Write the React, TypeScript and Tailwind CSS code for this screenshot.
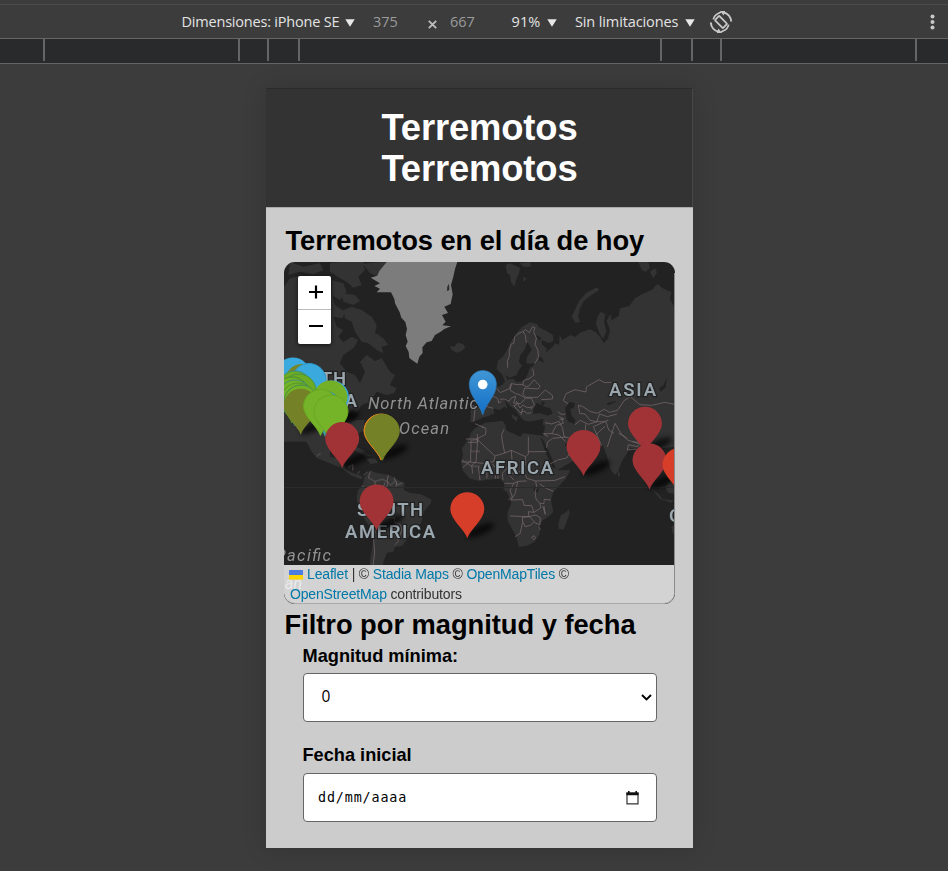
import React from "react";

const pinPath = "M0 0C-3 -9 -17 -19 -17 -29A17 17 0 0 1 17 -29C17 -19 3 -9 0 0Z";

type PinProps = { x: number; y: number; fill: string; stroke?: string; shadow?: boolean };

function Pin({ x, y, fill, stroke = "none", shadow = true }: PinProps) {
  return (
    <g transform={`translate(${x} ${y})`}>
      {shadow && <ellipse cx="13" cy="-8" rx="15" ry="4.5" transform="rotate(-24 13 -8)" fill="#000" opacity="0.7" filter="url(#soft)" />}
      <path d={pinPath} fill={fill} stroke={stroke} strokeWidth="1" />
    </g>
  );
}

function Label({ x, y, w, children }: { x: number; y: number; w?: number; children: string }) {
  return (
    <text x={x} y={y} textLength={w} fontSize="18.5" fontWeight="600" fill="#9ba7af" stroke="#222" strokeWidth="2.5" paintOrder="stroke">
      {children}
    </text>
  );
}

function WorldMap() {
  return (
    <svg className="block h-full w-full" viewBox="284 262 391 342" preserveAspectRatio="none" fontFamily="Roboto, sans-serif">
      <defs>
        <filter id="soft" x="-50%" y="-150%" width="200%" height="400%"><feGaussianBlur stdDeviation="2.6" /></filter>
        <linearGradient id="blue" x1="0" y1="0" x2="0" y2="1"><stop offset="0" stopColor="#4096d5" /><stop offset="1" stopColor="#126fc6" /></linearGradient>
      </defs>
      <rect x="284" y="262" width="391" height="342" fill="#222" />

      <g transform="translate(280 255) scale(.33333)" fill="#333">
        <path d="M12 95L30 70 60 62 110 75 150 100 165 150 195 170 188 190 160 185 170 215 190 225 175 245 190 262 215 245 235 255 220 280 190 300 180 325 200 350 225 360 240 385 255 350 240 320 260 300 285 318 305 310 330 350 345 360 330 390 350 400 342 415 320 420 290 410 270 440 245 450 225 480 200 510 200 560 12 560Z" />
        <path d="M30 21L70 35 120 25 130 45 100 58 60 50 25 60ZM150 25L180 21 250 21 255 45 235 65 245 90 220 98 200 80 180 70 150 50ZM248 26L300 21 350 21 325 45 295 65 270 55ZM155 75L190 85 200 110 180 135 155 120ZM185 115L225 120 240 138 220 150 190 140ZM190 165L215 155 245 165 275 185 290 210 285 235 310 250 325 270 305 275 310 295 290 285 265 265 245 260 225 230 215 200 195 190Z" />
        <path d="M285 235L300 240 290 250ZM510 272L522 275 533 263 550 268 556 278 545 288 530 293 515 285Z" />
        <path d="M320 21L298 48 292 62 272 68 300 85 283 93 300 101 290 112 333 112 343 132 345 145 359 172 364 188 376 201 381 222 377 240 383 260 377 273 386 291 388 309 400 318 412 326 418 305 428 294 427 277 440 262 455 258 465 240 482 230 493 222 513 214 487 211 497 200 486 180 504 174 493 155 512 147 518 118 513 90 520 65 525 42 532 21Z" fill="#7c7c7c" />
        <path d="M502 95L507 86 508 105 501 108Z" fill="#292929" />
      </g>

      <g transform="translate(475 255) scale(.33333)">
        <path d="M68 318L83 305 96 286 105 265 125 235 142 215 165 202 188 208 190 216 210 226 234 240 235 258 222 264 200 255 200 268 215 280 213 292 233 275 240 265 252 270 254 240 262 255 287 240 300 246 315 233 345 223 362 232 377 248 386 265 399 250 405 225 395 198 406 177 410 196 431 183 435 160 463 153 480 130 500 118 531 104 548 86 560 98 590 112 584 130 600 160 600 575 560 580 490 580 465 580 440 620 430 647 420 661 407 645 395 600 383 570 340 558 325 580 290 620 250 644 238 625 223 592 204 548 210 513 190 500 168 500 148 497 130 480 125 500 113 490 105 465 88 455 75 465 55 460 58 475 35 485 32 500 5 510 -14 500 -12 450 20 449 20 425 45 415 66 395 78 392 90 380 82 360 65 342Z" fill="#333" />
        <path d="M92 30L105 25 135 38 132 55 123 75 118 95 108 80 105 60 96 55ZM135 25L165 21 168 35 145 35ZM145 66L155 70 145 82ZM490 21L520 21 525 40 512 50 500 45ZM525 50L540 40 546 52 535 70ZM290 185L302 160 312 138 333 115 365 97 373 105 350 119 326 138 314 162 310 183 315 200 302 204ZM362 205L370 180 378 170 391 178 387 202 394 228 385 253 374 236Z" fill="#333" />
        <path d="M20 400L40 378 35 350 45 350 58 380 65 400 50 410Z" fill="#333" />
        <path d="M157 260L150 282 136 300 132 320 141 332 128 350 126 360 105 368 90 360 98 374 116 371 124 382 147 378 157 360 165 338 187 323 165 326 153 324 156 305 170 284Z" fill="#222" />
        <path d="M182 240L199 248 193 258ZM190 305L202 309 207 322 194 318ZM175 463L185 443 201 451 198 438 211 442 203 454 226 460 233 475 220 482 192 474 174 477ZM271 458L285 441 300 445 296 458 286 462 290 482 301 495 298 507 280 500 273 485ZM88 430L102 450 122 465 134 484 122 485 100 470ZM552 400L566 390 575 369 572 396 558 410ZM395 445L422 438 421 442 399 451Z" fill="#222" />
      </g>

      <g transform="translate(280 420) scale(.33333)" fill="#333">
        <path d="M20 0L120 0 155 20 230 0 254 0 250 32 232 42 205 32 180 45 150 80 150 110 188 119 196 147 218 159 240 165 249 174 242 178 215 167 182 143 140 126 109 113 94 93 72 52Z" />
        <path d="M211 83L230 80 250 91 273 107 256 110 231 95ZM258 115L285 116 295 128 272 132Z" />
        <path d="M253 171L272 151 283 157 305 161 330 166 355 181 374 190 371 209 390 219 423 223 455 239 451 252 433 272 423 311 397 325 388 348 367 377 345 381 340 395 321 398 310 425 310 455 295 492 282 500 270 475 269 430 278 372 286 335 261 309 239 276 230 238 234 210 248 196Z" />
      </g>

      <g transform="translate(475 420) scale(.33333)" fill="#333">
        <path d="M0 25L30 8 83 2 92 15 95 31 136 50 143 39 188 45 204 47 219 83 236 124 250 151 286 150 274 174 244 206 235 216 228 241 235 275 222 289 203 301 194 320 194 341 179 365 159 376 132 382 124 351 98 302 97 280 109 249 98 219 85 208 89 191 75 176 37 179 14 183 -15 176 -36 153 -42 125 -36 106 -39 85 -18 54 -12 38Z" />
        <path d="M274 276L281 268 284 280 266 329 251 326 250 311 257 286ZM427 147L436 164 429 172ZM486 84L500 90 500 133 510 145 520 165 530 155 532 187 540 212 528 185 515 150 510 85ZM527 202L550 222 563 238 595 241 590 248 554 236ZM570 200L590 180 600 195 600 221 580 219ZM589 322L600 310 600 349 594 343Z" />
        <path d="M-10 8L25 -8 85 -18 92 -6 100 12 130 22 150 30 145 12 165 5 205 -4 203 28 190 44 145 38 136 48 96 30 92 14 82 2 30 7 0 20Z" fill="#222" />
        <path d="M196 51L205 61 224 100 242 145 234 144 211 96ZM273 69L292 85 305 91 301 97 286 88 269 77Z" fill="#222" />
        <path d="M175 200H190V216H177ZM203 231L207 247 203 250Z" fill="#222" />
      </g>

      <g fill="none" stroke="#907d81" strokeWidth="2.1" strokeLinejoin="round" opacity=".78">
        <g transform="translate(475 255) scale(.33333)">
          <path d="M98 338L97 318 103 303 103 288 108 268 116 265 119 246 128 237 144 230 151 240 154 264M144 230L152 224 163 233 173 215 180 218 176 230 184 250 180 268 189 286 190 307 178 328M173 341L177 360 163 371 145 377 144 389 154 395 163 392 177 374M177 374L195 393 190 402 149 399M149 399L143 418 153 427 188 427 211 405 233 422 232 432 199 434M65 400L76 413 103 401 109 386 129 389 144 389M109 386L105 406 121 415 137 421 150 429 170 430 178 450 167 463M75 433L88 432 102 439 110 428 122 424 116 444 136 446 151 432M124 438L135 459 143 450 157 458 171 456M126 449L116 452 136 473 146 468 157 475 169 473M54 424L68 430 71 444 79 439M-8 452L1 455-4 499M20 450L55 460M143 461L138 480M265 437L273 416 300 404 333 411 334 396 372 374 389 383 408 382M265 437L279 446M310 451L322 454 345 469 366 475 388 463 403 472 428 466 447 437 466 425 495 449 530 451 570 442 598 448M310 451L314 475 330 477 345 496 365 500 374 477 397 485 426 477M210 503L230 507 252 499 263 520 267 545 292 552M248 470L259 478 272 477M250 484L267 492 254 493M300 509L316 496 340 508 366 500 393 500 401 525 417 535M332 508L331 535 355 548 373 529 390 514M0 506L28 518" />
        </g>
        <g transform="translate(475 420) scale(.33333)">
          <path d="M20 20L33 25 32 43 5 57-27 57M7 42L7 67-21 67M5 57L60 108 89 99 81 58 80 43 87 28M89 99L109 91 152 110 160 102 160 50M160 95H215M152 110L150 137 143 150 156 175 182 183 222 182 240 181 270 170M109 91L111 120 97 140 101 162 117 181M60 108L56 125 25 130-17 126-37 143M8 60L3 125-10 136-7 161M10 140L15 180M35 136L36 175M53 132L62 145 61 176M67 143L69 177M98 141L82 161 84 181M101 162L132 156 145 150M88 190L117 190 128 184 155 183M117 190L105 210 112 230 100 240M128 184L121 220 108 240 143 239 147 256 170 257 177 277 160 275 162 290 105 288M182 183L185 201 180 216 183 237 194 250 207 251 207 238 228 240M194 192L218 207 235 214M177 277L197 264 195 251M203 258L211 283 207 258M162 290L142 292 143 307 135 341M145 307L150 320 166 316 178 305 164 291M162 290L182 285 196 293 194 314 178 308M135 341L120 350M170 352L177 347 182 353 177 359ZM190 320L196 327 191 332M220 50L205 41 230 41 244 16 265 10 260 -4M215 83L217 67 232 55 272 51M230 41L252 45 272 65M248 120L275 114 289 93M225 132L247 121M380 78L355 20 400 0M397 81L420 10 439 42 458 60 493 72 487 80 460 74 457 90 485 87M430 39L457 55M472 65L492 67" />
        </g>
        <g transform="translate(280 420) scale(.33333)">
          <path d="M271 155L265 173 284 184 289 210 301 215M245 197L260 207 278 218 257 230 248 225M284 184L309 178 324 187 319 205M325 165L321 184 332 196 346 182 342 172M346 182L353 195 368 188M285 210L308 205 315 188M350 185L348 201M240 260L278 247 286 258 298 268 282 280M278 280L291 287 311 278 325 291 343 292 344 306 360 313 366 329 360 346M289 289L291 309 304 312 324 325 343 326 345 345 365 355M287 330L281 359 284 400 278 443 286 490M345 345L356 363 344 375M545 125H572V94L600 94M546 121L576 139 600 139M573 94V62L597 57M204 143L219 133 218 151M232 161L239 154M250 166L265 155M110 108L122 100" />
        </g>
      </g>

      <rect x="284" y="487" width="391" height="1" fill="#2b2b2b" />
      <g fontStyle="italic" fontSize="16.5" fill="#919191" stroke="#222" strokeWidth="2" paintOrder="stroke">
        <text x="368" y="409" textLength="110">North Atlantic</text>
        <text x="399" y="433.5" textLength="50">Ocean</text>
        <text x="275.5" y="561" textLength="55.5">Pacific</text>
      </g>
      <Label x={281} y={385} w={65}>NORTH</Label>
      <Label x={269} y={407} w={88}>AMERICA</Label>
      <Label x={357} y={516} w={66}>SOUTH</Label>
      <Label x={345} y={538} w={90}>AMERICA</Label>
      <Label x={481} y={473.5} w={72}>AFRICA</Label>
      <Label x={609} y={395.5} w={47}>ASIA</Label>
      <Label x={669} y={522} w={80}>OCEANIA</Label>

      <Pin x={293} y={403.5} fill="#3aa9dd" />
      <Pin x={302} y={410} fill="#788627" />
      <Pin x={309} y={409.5} fill="#3aa9dd" stroke="#2e9ace" />
      <Pin x={332} y={426.5} fill="#3aa9dd" />
      <Pin x={330.5} y={426.5} fill="#73b027" />
      <Pin x={295} y={417} fill="#6eab25" stroke="#388f78" shadow={false} />
      <Pin x={299} y={420} fill="#6eab25" stroke="#489344" shadow={false} />
      <Pin x={292} y={423} fill="#72b225" stroke="#468d2b" shadow={false} />
      <Pin x={295} y={426} fill="#74b227" stroke="#408a77" shadow={false} />
      <Pin x={298} y={429} fill="#74b227" stroke="#51962b" shadow={false} />
      <Pin x={301} y={431} fill="#74b227" stroke="#458a4e" shadow={false} />
      <Pin x={300.7} y={434.7} fill="#748126" />
      <Pin x={325} y={437} fill="#3e97a0" shadow={false} />
      <Pin x={320.5} y={435.5} fill="#75b329" stroke="#67a822" shadow={false} />
      <Pin x={331} y={441} fill="#75b329" stroke="#67a822" shadow={false} />
      <Pin x={342.2} y={468} fill="#a13336" />
      <Pin x={381} y={460} fill="#e28a20" stroke="#e28a20" />
      <Pin x={382.3} y={460.3} fill="#748126" stroke="#748126" shadow={false} />
      <Pin x={376.6} y={530.5} fill="#a13336" />
      <Pin x={467.3} y={538.3} fill="#d63e2a" />
      <Pin x={583.5} y={476} fill="#a13336" />
      <Pin x={645} y={452.7} fill="#a13336" />
      <Pin x={649.5} y={489.5} fill="#a13336" />
      <Pin x={679.5} y={494} fill="#d63e2a" />
      <path d="M482.7 415C479.5 403 469.2 396 469.2 384A13.6 13.6 0 0 1 496.4 384C496.4 396 486 403 482.7 415Z" fill="url(#blue)" stroke="#2e78b4" strokeWidth=".7" />
      <circle cx="482.7" cy="384.5" r="4.8" fill="#fff" />
    </svg>
  );
}

function Caret() {
  return <svg className="mt-[2px] h-2 w-[10px]" viewBox="0 0 10 8"><path d="M.3 .3H9.7L5 7.8Z" fill="#e8e8e8" /></svg>;
}

function RotateIcon() {
  return (
    <svg className="h-6 w-6" viewBox="0 0 24 24" fill="none" stroke="#c8c8c8" strokeWidth="1.8">
      <rect x="8.9" y="6.3" width="6.2" height="11.4" rx="0.8" transform="rotate(-45 12 12)" />
      <path d="M14.5 2.2A10.2 10.2 0 0 1 22.2 11.5M9.5 21.8A10.2 10.2 0 0 1 1.8 12.5" strokeWidth="2" />
      <path d="M11 1H16.2L14.6 5.4ZM13 23H7.8L9.4 18.6Z" fill="#c8c8c8" stroke="none" />
      <path d="M4.3 9.4A9 9 0 0 1 9.6 3.2L12 2M19.7 14.6A9 9 0 0 1 14.4 20.8L12 22" strokeWidth="1.7" />
    </svg>
  );
}

function Toolbar() {
  return (
    <div className="flex h-[35px] shrink-0 items-center border-t border-b border-t-[#4b4b4b] border-b-[#656565] pl-[181.5px] font-['Open_Sans',sans-serif] text-[14.5px] whitespace-nowrap text-[#e3e3e3]">
      <span className="w-[163.5px] tracking-[-0.2px]">Dimensiones: iPhone SE</span>
      <Caret />
      <span className="ml-[18px] w-[55px] tracking-[-0.1px] text-[#9b9b9b]">375</span>
      <svg className="mt-[5px] h-[9px] w-[9px]" viewBox="0 0 9 9"><path d="M.8 .8L8.2 8.2M8.2 .8L.8 8.2" stroke="#bdbdbd" strokeWidth="1.8" /></svg>
      <span className="ml-[13px] w-[61.5px] tracking-[-0.1px] text-[#9b9b9b]">667</span>
      <span className="w-[35.5px] tracking-[0.1px]">91%</span>
      <Caret />
      <span className="ml-[18px] w-[110px] tracking-[-0.12px]">Sin limitaciones</span>
      <Caret />
      <span className="ml-[14px]"><RotateIcon /></span>
      <svg className="ml-auto h-4 w-[31px]" viewBox="0 0 31 16" fill="#c8c8c8"><circle cx="15.5" cy="2.4" r="2" /><circle cx="15.5" cy="8" r="2" /><circle cx="15.5" cy="13.6" r="2" /></svg>
    </div>
  );
}

const tick = "h-[22px] shrink-0 border-r-2 border-[#656565]";

function Ruler() {
  return (
    <div className="flex h-[25px] shrink-0 border-b border-[#656565] bg-[#292a2c]">
      <div className={`${tick} w-[45px]`} />
      <div className={`${tick} w-[195px]`} />
      <div className={`${tick} w-[29px]`} />
      <div className={`${tick} w-[31px]`} />
      <div className={`${tick} w-[362px]`} />
      <div className={`${tick} w-[31px]`} />
      <div className={`${tick} w-[29px]`} />
      <div className={`${tick} w-[195px]`} />
    </div>
  );
}

function MapPanel() {
  return (
    <div className="relative ml-[18px] h-[342px] w-[391px] overflow-hidden rounded-[11px] bg-[#ccc]">
      <WorldMap />
      <div className="absolute top-[14px] left-[14px] w-[33px] overflow-hidden rounded-[2px] bg-white shadow-[0_1px_4px_rgba(0,0,0,0.65)]">
        {[true, false].map((plus) => (
          <div key={String(plus)} className="flex h-[34px] items-center justify-center border-b border-[#bbb] pb-[2px] pl-[2px] last:border-transparent">
            <svg className="h-[14px] w-[14px]" viewBox="0 0 14 14"><path d={plus ? "M0 7H14M7 .5V13.5" : "M0 7H14"} stroke="#000" strokeWidth="2.2" /></svg>
          </div>
        ))}
      </div>
      <div className="absolute inset-x-0 bottom-0 h-[39px] rounded-b-[11px] border-r border-b border-[#aaa] bg-[#d3d3d3] pl-[6px] text-[14px] leading-[19.5px] tracking-[-0.16px] whitespace-nowrap text-[#333]">
        <span className="absolute top-[9px] left-[1px] font-['Roboto',sans-serif] text-[16px] leading-[20px] tracking-normal text-[#ebebeb] italic">an</span>
        <div className="relative -ml-px">
          <svg className="mr-[4px] inline h-[10px] w-[14px] align-[-1px]" viewBox="0 0 14 10"><path d="M0 0H14V5H0Z" fill="#4c7be1" /><path d="M0 5H14V9.5H0Z" fill="#ffd500" /></svg>
          <span className="text-[#0078a8]">Leaflet</span> | © <span className="text-[#0078a8]">Stadia Maps</span> © <span className="text-[#0078a8]">OpenMapTiles</span> ©
        </div>
        <div className="relative"><span className="text-[#0078a8]">OpenStreetMap</span> contributors</div>
      </div>
      <div className="absolute top-[11px] right-0 bottom-[11px] w-px bg-[#8a8a8a]" />
    </div>
  );
}

export default function App() {
  return (
    <div className="flex h-[871px] w-[948px] flex-col overflow-hidden bg-[#3c3c3c] pt-1 font-['Liberation_Sans',Arial,sans-serif]">
      <Toolbar />
      <Ruler />
      <div className="mt-6 ml-[266px] h-[760px] w-[427px] bg-[#ccc] text-black shadow-[0_0_24px_rgba(0,0,0,0.14)]">
        <header className="h-[119px] border-t border-r border-t-[#2b2b2b] border-r-[#484848] bg-[#333] pt-[18px] pl-[1px] text-center text-[36.4px] leading-[41px] font-bold tracking-[-0.15px] text-white">
          <h1>Terremotos</h1>
          <h1>Terremotos</h1>
        </header>
        <h2 className="h-[55px] border-t border-[#aaa] pt-[16px] pl-[19.5px] text-[27.3px] leading-[34px] font-bold tracking-[-0.07px] whitespace-nowrap">Terremotos en el día de hoy</h2>
        <MapPanel />
        <h2 className="pt-[4px] pl-[18.5px] text-[27.3px] leading-[34px] font-bold tracking-[-0.03px] whitespace-nowrap">Filtro por magnitud y fecha</h2>
        <form className="pr-[36px] pl-[36.5px] text-[18.2px] leading-[22px] font-bold">
          <div className="pt-[3px]">Magnitud mínima:</div>
          <div className="mt-[6px] flex h-[49px] w-[354.5px] items-center rounded-[4px] border border-[#666] bg-white pr-[4px] pl-[18px] font-['Open_Sans',sans-serif] text-[15.5px] font-normal">
            <span className="mt-[-4px]">0</span>
            <svg className="ml-auto h-[7px] w-[11px]" viewBox="0 0 11 7"><path d="M1 1L5.5 5.5L10 1" fill="none" stroke="#000" strokeWidth="1.9" /></svg>
          </div>
          <div className="mt-[22px]">Fecha inicial</div>
          <div className="mt-[7px] flex h-[49px] w-[354.5px] items-center rounded-[4px] border border-[#666] bg-white pr-[17px] pl-[14.5px] font-['DejaVu_Sans_Mono',monospace] text-[13.4px] font-normal">
            <span className="tracking-[0.85px]">dd/mm/aaaa</span>
            <svg className="ml-auto h-[14px] w-[13px]" viewBox="0 0 13 14"><path d="M1 2.2H12V12.9H1Z" fill="none" stroke="#333" strokeWidth="1.2" /><path d="M.4 1.4H12.6V4.3H.4ZM2 0H3.6V2H2ZM9.4 0H11V2H9.4Z" fill="#111" /></svg>
          </div>
        </form>
      </div>
    </div>
  );
}
